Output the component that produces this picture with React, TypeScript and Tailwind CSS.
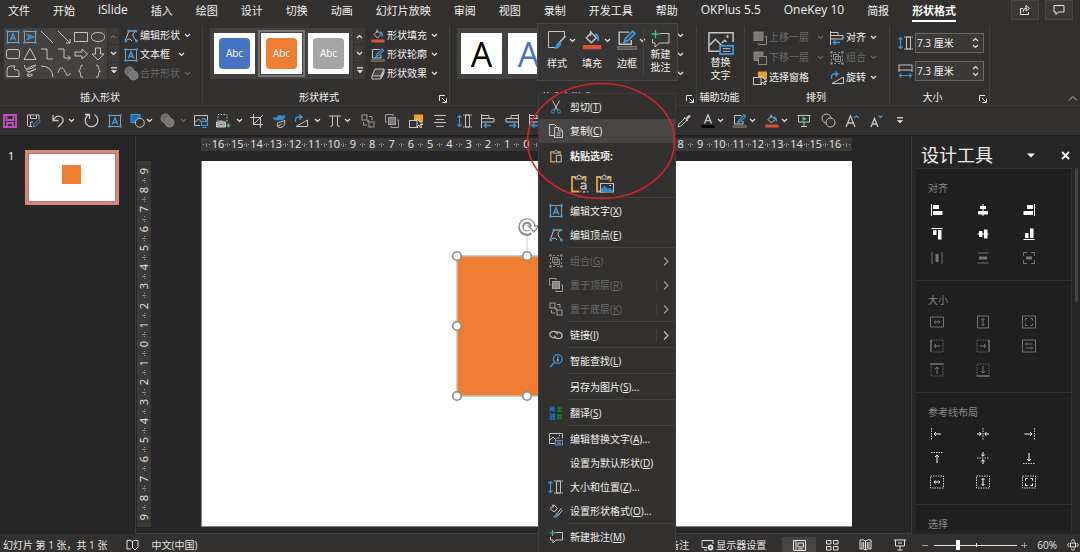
import React, { ReactNode } from "react";

const L = "#c8c6c4";
const B = "#3a96dd";
const RED = "#d9553a";
const DIM = "#6e6c6a";

function Svg({ children, w = 16, h = 16, vb, stroke = L, sw = 1 }: { children: ReactNode; w?: number; h?: number; vb?: string; stroke?: string; sw?: number }) {
  return (
    <svg width={w} height={h} viewBox={vb ?? `0 0 ${w} ${h}`} fill="none" stroke={stroke} strokeWidth={sw} className="block shrink-0" aria-hidden="true">
      {children}
    </svg>
  );
}

const Chevron = ({ dim = false, up = false }: { dim?: boolean; up?: boolean }) => (
  <Svg w={7} h={5} stroke={dim ? DIM : "#e8e6e4"} sw={1.2}>
    <path d={up ? "M1 4l2.5-2.5L6 4" : "M1 1l2.5 2.5L6 1"} />
  </Svg>
);
const Right = ({ dim = false }: { dim?: boolean }) => (
  <Svg w={6} h={9} stroke={dim ? "#a19f9d" : "#c8c6c4"} sw={1.1}>
    <path d="M1 .5l4 4-4 4" />
  </Svg>
);
const MoreArrow = () => (
  <Svg w={8} h={7} stroke="#e8e6e4" sw={1.2}>
    <path d="M1.5 3.5h5L4 6z" fill="#e8e6e4" strokeWidth="0.6" />
    <path d="M1 .8h6" />
  </Svg>
);
const Launcher = () => (
  <Svg w={8} h={8} stroke="#e8e6e4">
    <path d="M.5 6V.5H6M3 3l4 4M7.5 3.5v4h-4" />
  </Svg>
);

const corners = (x1: number, y1: number, x2: number, y2: number, c = B) =>
  [[x1, y1], [x2, y1], [x1, y2], [x2, y2]].map(([x, y]) => <rect key={`${x}-${y}`} x={x - 1} y={y - 1} width="2.4" height="2.4" fill={c} stroke="none" />);

const TextBox = ({ turned = false }: { turned?: boolean }) => (
  <Svg w={14} h={14}>
    <rect x="1.5" y="1.5" width="11" height="11" stroke="#a19f9d" />
    <path d="M4.300 10.500L7 3.700l2.700 6.800M5.300 8.400h3.400" stroke={B} strokeWidth="1.500" transform={turned ? "rotate(90 7 7)" : undefined} />
    {corners(1.3, 1.3, 12.3, 12.3)}
  </Svg>
);
const EditPoints = () => (
  <Svg w={14} h={14}>
    <path d="M5 2h6.500Q8 5 9 7t3.500 5M1.500 11L4.500 3M2 12q3.500-4 6 0" />
    <rect x="3.500" y="0.800" width="2.600" height="2.600" fill={B} stroke="none" />
    <rect x="10.500" y="0.800" width="2.600" height="2.600" fill={B} stroke="none" />
    <rect x="0.500" y="10.800" width="2.600" height="2.600" fill={B} stroke="none" />
    <rect x="11.200" y="10.800" width="2.600" height="2.600" fill={B} stroke="none" />
  </Svg>
);
const Merge = ({ light = false }: { light?: boolean }) => (
  <Svg w={15} h={15} stroke={light ? L : "#8a8886"}>
    <circle cx="5.5" cy="5.5" r="4.500" fill={light ? "none" : "#6e6c6a"} />
    <circle cx="9.500" cy="9.500" r="4.500" fill={light ? "#323130" : "#7a7876"} />
  </Svg>
);
const Bucket = ({ w = 14 }: { w?: number }) => (
  <Svg w={w} h={w} vb="0 0 14 14">
    <path d="M6 .5v3.500M3 5.500L6.500 2 10 5.500 6.500 9z" />
    <path d="M9 3q2.500.5 2.300 4.500" stroke={B} strokeWidth="1.500" />
    <rect x="0.500" y="10.500" width="13" height="3" fill={RED} stroke="none" />
  </Svg>
);
const Outline = ({ w = 14 }: { w?: number }) => (
  <Svg w={w} h={w} vb="0 0 14 14">
    <path d="M8.500 1.500h-7v8.500h8.500V7" />
    <path d="M5 8.500l1-2.500 5-5 1.500 1.500-5 5z" stroke={B} strokeWidth="1.300" />
    <rect x="0.500" y="11.500" width="13" height="2" fill="#5a5856" stroke="#8a8886" strokeWidth="0.500" />
  </Svg>
);
const Effects = () => (
  <Svg w={14} h={14}>
    <path d="M4 2h9l-3 7H1z" fill="#4a4846" />
    <path d="M1 9v3h8.500l3.500-6.500V2M10 9v3" />
    <path d="M10.500 9.500l2-4" strokeWidth="2" />
  </Svg>
);
const BringFront = () => (
  <Svg w={14} h={14} stroke="#8a8886">
    <rect x="1" y="1" width="9" height="8.500" fill="#7a7876" />
    <path d="M12 5.500h1.500v8H5.500V12" />
  </Svg>
);
const SendBack = () => (
  <Svg w={14} h={14} stroke="#8a8886">
    <path d="M5 9.500H1V1h9v3.500" fill="#7a7876" />
    <rect x="5.500" y="5.500" width="8" height="8" fill="#323130" />
  </Svg>
);
const Selection = () => (
  <Svg w={15} h={14}>
    <rect x="5" y="0.500" width="9" height="8" fill="#e9a32c" stroke="none" />
    <rect x="0.500" y="6.500" width="8" height="7" fill="#323130" />
    <path d="M8 5v8l2-2 1.500 3 1.300-.7-1.500-2.800H14z" fill="#323130" stroke="#e8e6e4" strokeWidth="0.900" />
  </Svg>
);
const AlignL = ({ right = false }: { right?: boolean }) => (
  <Svg w={14} h={14}>
    <g transform={right ? "matrix(-1 0 0 1 14 0)" : undefined}>
      <path d="M.5 0v14M1 1.500h7v3H1M1 4.500h12v3.500H1" />
      <path d="M3 11.500h7M5.500 9.200L3.200 11.500l2.300 2.300" stroke={B} strokeWidth="1.300" />
    </g>
  </Svg>
);
const Group = ({ dim = false }: { dim?: boolean }) => (
  <Svg w={14} h={14} stroke={dim ? "#8a8886" : L}>
    <path d="M4 1.500h6M4 12.500h6M1.500 4v6M12.500 4v6" strokeDasharray="2 2" />
    <rect x="3.500" y="3.500" width="5" height="5" />
    <rect x="5.500" y="5.500" width="5" height="5" />
    {corners(1.2, 1.2, 12.2, 12.2, dim ? "#8a8886" : L)}
  </Svg>
);
const Rotate = () => (
  <Svg w={14} h={14}>
    <path d="M2 12.500h11.500V6z" />
    <path d="M1.500 8V6q0-3 3-3H8M5.500.5L8 3 5.500 5.500" stroke={B} strokeWidth="1.300" />
  </Svg>
);
const SizeH = () => (
  <Svg w={15} h={14}>
    <rect x="8.500" y="1" width="4" height="12" />
    <path d="M6 1h9M6 13h9" strokeDasharray="1.500 1" />
    <path d="M2.500 1.500v11M.5 3.500l2-2 2 2M.5 10.500l2 2 2-2" stroke={B} strokeWidth="1.200" />
  </Svg>
);
const SizeW = () => (
  <Svg w={15} h={14}>
    <rect x="1" y="1" width="13" height="5" />
    <path d="M1 6v2M14 6v2" />
    <path d="M1.500 11.500h12M3.500 9.500l-2 2 2 2M11.500 9.500l2 2-2 2" stroke={B} strokeWidth="1.200" />
  </Svg>
);
const AltText = ({ w = 14 }: { w?: number }) => (
  <Svg w={w} h={w} vb="0 0 14 14" sw={w > 20 ? 0.8 : 1}>
    <path d="M7 11.500H.500V1.500h13v5M1 8l3-3 3.500 3.500M7.500 7L9 5.500l1 1" />
    <path d="M10 3.500h1" strokeWidth="1.500" />
    <rect x="6.500" y="8.500" width="7" height="4.500" fill="#323130" stroke={B} strokeWidth="1" />
    <path d="M8 10h4M8 11.500h4" strokeWidth="0.500" />
  </Svg>
);
const Back4 = () => (
  <Svg w={14} h={14} stroke="#a19f9d">
    <rect x="1" y="1" width="5" height="5" />
    <rect x="8" y="8" width="5" height="5" />
    <path d="M8 2.500h3V6M2.500 8v3H6" />
    <path d="M6.500 6.500h1v1h-1z" fill="#7a7876" />
  </Svg>
);

/* ---------- Ribbon pieces ---------- */

function Btn({ icon, text, chevron = true, dim = false, wide = false }: { icon: ReactNode; text: string; chevron?: boolean; dim?: boolean; wide?: boolean }) {
  return (
    <button className={`flex h-[19px] items-center gap-0.5 whitespace-nowrap ${dim ? "text-[#6e6c6a]" : "text-[#f3f2f1]"}`}>
      <span className="flex w-[14px] justify-center">{icon}</span>
      {text}
      {chevron && <span className={wide ? "ml-1.5" : "ml-0.5"}><Chevron dim={dim} /></span>}
    </button>
  );
}

function RibbonGroup({ title, width, launcher = false, children }: { title: string; width: string; launcher?: boolean; children: ReactNode }) {
  return (
    <section className={`relative flex shrink-0 flex-col border-r border-[#44423f] ${width}`}>
      <div className="h-[65px]">{children}</div>
      <h2 className={`h-3 text-center leading-3 ${launcher ? "pr-3.5" : "pr-0.5"}`}>{title}</h2>
      {launcher && (
        <button aria-label={`${title}选项`} className="absolute right-0.5 bottom-0">
          <Launcher />
        </button>
      )}
    </section>
  );
}

function GalleryScroll({ top = false }: { top?: boolean }) {
  return (
    <div className="flex w-3 flex-col divide-y divide-[#323130] border-l border-[#323130] bg-[#3e3c3a]">
      <button aria-label="上一行" className="flex flex-1 items-center justify-center"><Chevron up dim={top} /></button>
      <button aria-label="下一行" className="flex flex-1 items-center justify-center"><Chevron /></button>
      <button aria-label="更多" className="flex flex-1 items-center justify-center"><MoreArrow /></button>
    </div>
  );
}

const shapePaths = [
  "", "", "M1 1l12 12", "M1 1l12 12M13 9v4H9", "M.5 2.500h13v9H.5z", "M7 2.500c9 0 9 9 0 9s-9-9 0-9z",
  "M3 2.500h8q2.500 0 2.500 2v5q0 2-2.500 2H3q-2.500 0-2.500-2v-5q0-2 2.500-2z", "M7 1.500L13 12.500H1z", "M1 2h6v10h6", "M1 2h6v9h6M11 8.500l2.500 2.500L11 13.500",
  "M1 5h7V2l5.500 5L8 12V9H1z", "M4.500 1h5v6H13l-6 6-6-6h3.500z",
  "M1 12.500V6q0-4 4-4h4q-2 3 0 4 4-1 4 3v3.500z", "M1.500 1q0 5 4.500 4 5-1 7-4Q4 3 3.500 6.500q1 3 9.500-1.500-9 3-8.500 6.500 2 2.500 5-.500-1-2-5 1", "M1 2q11 0 12 11", "M1 9q2.500-8 5.500-4t3 6q2 2 4-2",
  "M9 1Q6.500 1 6.500 3.500T4.500 7q2 0 2 3.500T9 13", "M5 1q2.500 0 2.500 2.500T9.500 7q-2 0-2 3.500T5 13",
];

const StyleTile = ({ fill, selected = false }: { fill: string; selected?: boolean }) => (
  <button className={`flex h-[47px] w-[47px] items-center justify-center border-2 ${selected ? "border-[#767472]" : "border-transparent"}`}>
    <span className="flex h-[41px] w-[41px] items-center justify-center bg-white">
      <span className={`flex h-[31px] w-[31px] items-center justify-center rounded-sm text-[10px] text-white ${fill}`}>Abc</span>
    </span>
  </button>
);

const tabs = ["文件", "开始", "iSlide", "插入", "绘图", "设计", "切换", "动画", "幻灯片放映", "审阅", "视图", "录制", "开发工具", "帮助", "OKPlus 5.5", "OneKey 10", "简报", "形状格式"];
const latinTab = /^[A-Za-z0-9 .]+$/;

function TabBar() {
  return (
    <header className="flex h-[26px] items-start justify-between pl-2 pr-[7px]">
      <nav className="flex gap-[23px] whitespace-nowrap text-[11px] text-[#f3f2f1]">
        {tabs.map((t) => (
          <a
            key={t}
            href="#"
            className={
              t === "形状格式"
                ? "h-[22px] border-b-2 border-white pt-[3px] text-[11px] font-bold leading-4 text-white"
                : latinTab.test(t)
                  ? "pt-0.5 text-[12px] leading-4"
                  : "pt-[3px] text-[11px] leading-4"
            }
          >
            {t}
          </a>
        ))}
      </nav>
      <div className="flex gap-1.5">
        <button aria-label="共享" className="flex h-5 w-7 items-center justify-center border border-[#4a4846] bg-[#3b3a39]">
          <Svg w={12} h={12} stroke="#e8e6e4"><path d="M4 4.500H1.500v6h8V8M4 8q0-4 4-4M7 1.500L10.500 4.500 7 7z" /></Svg>
        </button>
        <button aria-label="批注" className="flex h-5 w-7 items-center justify-center border border-[#4a4846] bg-[#3b3a39]">
          <Svg w={12} h={12} stroke="#e8e6e4"><path d="M1 1.500h10v6.500H5.500L3 10.500V8H1z" /></Svg>
        </button>
      </div>
    </header>
  );
}

function SizeField({ label, icon }: { label: string; icon: ReactNode }) {
  return (
    <div className="flex h-[20px] items-center gap-0.5">
      {icon}
      <div className="flex h-5 w-[69px] border border-[#6a6866] bg-[#3b3a39]">
        <input aria-label={label} defaultValue="7.3 厘米" className="w-0 flex-1 bg-transparent pl-px text-[10px] text-[#f3f2f1] outline-none" />
        <div className="flex w-4 flex-col items-center justify-evenly">
          <button aria-label={`增加${label}`}><Chevron up /></button>
          <button aria-label={`减少${label}`}><Chevron /></button>
        </div>
      </div>
    </div>
  );
}

function Ribbon() {
  return (
    <div className="flex h-20 border-b border-[#403e3c] pb-0.5 text-[10px] text-[#f3f2f1]">
      <RibbonGroup title="插入形状" width="w-[203px]">
        <div className="flex gap-[5px] pl-1 pt-0.5">
          <div className="flex h-[51px] bg-[#444240]">
            <div className="grid w-[103px] grid-cols-6 grid-rows-3 place-items-center">
              {shapePaths.map((d, i) => (
                <button key={i} aria-label={`形状 ${i + 1}`}>
                  {i < 2 ? <TextBox turned={i === 1} /> : <Svg w={14} h={14}><path d={d} /></Svg>}
                </button>
              ))}
            </div>
            <GalleryScroll top />
          </div>
          <div className="-mt-0.5">
            <Btn icon={<EditPoints />} text="编辑形状" />
            <Btn icon={<TextBox />} text="文本框" wide />
            <Btn icon={<Merge />} text="合并形状" dim />
          </div>
        </div>
      </RibbonGroup>

      <RibbonGroup title="形状样式" width="w-[247px]" launcher>
        <div className="flex gap-1.5 pl-[7px] pt-0.5">
          <div className="flex h-[51px] bg-[#444240]">
            <div className="flex items-center px-px">
              <StyleTile fill="bg-[#4472c4]" />
              <StyleTile fill="bg-[#ed7d31]" selected />
              <StyleTile fill="bg-[#a5a5a5]" />
            </div>
            <GalleryScroll />
          </div>
          <div className="-mt-0.5">
            <Btn icon={<Bucket />} text="形状填充" />
            <Btn icon={<Outline />} text="形状轮廓" />
            <Btn icon={<Effects />} text="形状效果" />
          </div>
        </div>
      </RibbonGroup>

      <RibbonGroup title="艺术字样式" width="w-[247px]" launcher>
        <div className="flex justify-between pl-[7px] pr-3 pt-0.5">
          <div className="flex h-[51px] w-[150px] gap-1.5 bg-[#444240] px-1 py-[5px]">
            <button className="h-[41px] w-[41px] bg-white text-[34px] leading-[43px] text-black">A</button>
            <button className="h-[41px] w-[41px] bg-white text-[34px] leading-[43px] text-[#4472c4]">A</button>
          </div>
          <div className="-mt-0.5 flex flex-col">
            {["文本填充", "文本轮廓", "文本效果"].map((n) => (
              <button key={n} aria-label={n} className="flex h-[19px] items-center"><Chevron /></button>
            ))}
          </div>
        </div>
      </RibbonGroup>

      <RibbonGroup title="辅助功能" width="w-12">
        <button className="flex w-full flex-col items-center pt-1 leading-[13px]">
          <AltText w={26} />
          <span>替换<br />文字</span>
        </button>
      </RibbonGroup>

      <RibbonGroup title="排列" width="w-[145px]">
        <div className="flex gap-1.5 pl-2 pt-0.5">
          <div className="flex flex-col gap-px">
            <Btn icon={<BringFront />} text="上移一层" dim wide />
            <Btn icon={<SendBack />} text="下移一层" dim wide />
            <Btn icon={<Selection />} text="选择窗格" chevron={false} />
          </div>
          <div className="flex flex-col gap-px">
            <Btn icon={<AlignL />} text="对齐" />
            <Btn icon={<Group dim />} text="组合" dim />
            <Btn icon={<Rotate />} text="旋转" />
          </div>
        </div>
      </RibbonGroup>

      <RibbonGroup title="大小" width="w-[100px]" launcher>
        <div className="flex flex-col gap-2 pl-2 pt-[7px]">
          <SizeField label="高度" icon={<SizeH />} />
          <SizeField label="宽度" icon={<SizeW />} />
        </div>
      </RibbonGroup>
      <button aria-label="折叠功能区" className="ml-auto flex items-end pr-0.5 pb-0.5">
        <Svg w={10} h={6}><path d="M1 5.500l4-4 4 4" /></Svg>
      </button>
    </div>
  );
}

/* ---------- Quick access bar ---------- */

const Q = ({ name, children }: { name: string; children: ReactNode }) => (
  <button aria-label={name} className="flex w-4 shrink-0 items-center justify-center">{children}</button>
);
const QDrop = ({ name, children, dim = false, width = "w-6" }: { name: string; children: ReactNode; dim?: boolean; width?: string }) => (
  <button aria-label={name} className={`flex shrink-0 items-center justify-between ${width}`}>
    <span className="flex w-4 justify-center">{children}</span>
    <Chevron dim={dim} />
  </button>
);

function QuickBar() {
  return (
    <div role="toolbar" className="flex h-[30px] items-center border-b border-[#1c1b1a] pl-0.5">
      <div className="flex gap-2">
        <Q name="保存">
          <Svg w={14} h={14} stroke="#c04fc4" sw={1.8}><path d="M1 1h12v12H1zM3.500 1v5h7V1M4 13V9h6v4" /></Svg>
        </Q>
        <Q name="另存为">
          <Svg w={14} h={14}><path d="M5 12.500H1.500l-1-1V1H12v4M3.500 1v3.500h6V1M3.500 12V8H6" /><path d="M6 13l.7-2.500 5-5 1.700 1.700-5 5z" stroke={B} /></Svg>
        </Q>
        <QDrop name="撤消" width="w-[25px]">
          <Svg w={14} h={14} sw={1.3}><path d="M2 1v5.500h5.500M2 6.500q3-5.500 7.500-4 5 3 1 7L7 13" /></Svg>
        </QDrop>
        <Q name="恢复">
          <Svg w={15} h={15} sw={1.300}><path d="M1 1.500h4.500v4.500M10.500 1.800a6.300 6.300 0 1 1-5.500-.2" /></Svg>
        </Q>
        <Q name="文本框"><TextBox /></Q>
      </div>
      <div className="ml-1.5 flex gap-1.5">
        <QDrop name="形状">
          <Svg w={15} h={14}><rect x="1" y="0.500" width="9" height="8" fill="#1a6fc4" stroke={B} /><circle cx="9.800" cy="8.800" r="4.500" fill="#323130" /></Svg>
        </QDrop>
        <QDrop name="合并形状" dim width="w-7"><Merge /></QDrop>
        <Q name="图片">
          <Svg w={15} h={14}><path d="M6 11.500H.5V1.500h13v5M1 8.500L4.500 5l3 3M8 5.500L9.500 4l3 3" /><rect x="7.500" y="7.500" width="6" height="4" fill="#323130" stroke={B} strokeWidth="1.300" /><path d="M8.500 13.500h4" stroke={B} /></Svg>
        </Q>
        <QDrop name="屏幕截图" width="w-7">
          <Svg w={15} h={14}><path d="M2 7V.5h9V8" strokeDasharray="1.500 1.500" /><path d="M.5 8h2l1-1h3l1 1h2v5h-9z" fill="#a19f9d" /><circle cx="5" cy="10.300" r="1.300" fill="#323130" /><path d="M12.500 9.500v4M10.500 11.500h4" stroke="#4cc27a" strokeWidth="1.300" /></Svg>
        </QDrop>
        <Q name="裁剪"><Svg w={14} h={14}><path d="M3.500 0v10.500H13M0 3.500h10.500V14M3.500 10.500L13 1" /></Svg></Q>
        <Q name="更改形状">
          <Svg w={14} h={14}><path d="M1 3.500q3 1 4 0 1-3 3-2t5-.5q0 4-3 5H5Q1.500 6.500 1 3.500z" fill="#2f87d6" stroke={B} strokeWidth="0.500" /><path d="M5 11q0-3.500 3.500-3l4.500-1.500q0 7-5 7-3 0-3-2.500zM6 11.500q3 0 4-2" /></Svg>
        </Q>
        <QDrop name="旋转" width="w-7"><Rotate /></QDrop>
        <QDrop name="公式" width="w-6">
          <Svg w={14} h={14}><path d="M1 2h12M4.500 2v9q0 1.500-2 1.500M9.500 2v9q0 1.500 2 1.500" /></Svg>
        </QDrop>
      </div>
      <div className="ml-[9px] flex gap-2">
        <Q name="取消组合"><Back4 /></Q>
        <Q name="置于顶层">
          <Svg w={14} h={14} stroke="#a19f9d"><rect x="3.500" y="3.500" width="7" height="7" fill="#7a7876" /><path d="M2 8H.5V.5H8V2M12 6h1.500v7.500H6V12" /></Svg>
        </Q>
        <Q name="选择窗格"><Selection /></Q>
        <Q name="居中"><Svg w={14} h={14}><path d="M1 1.500h12M3 5.500h8M1 8.500h12M3 12.500h8" /></Svg></Q>
        <Q name="大小"><SizeH /></Q>
        <Q name="左对齐"><AlignL /></Q>
        <Q name="右对齐"><AlignL right /></Q>
        <Q name="分布"><AlignL /></Q>
      </div>
      <div className="ml-[132px] flex gap-2">
        <Q name="取色器">
          <Svg w={14} h={14}><path d="M1 13l1-3 6-6 2 2-6 6zM7 3l4 4" /><path d="M9 4.500l3-3.300 1.300 1.300-3.300 3z" fill={L} /></Svg>
        </Q>
        <QDrop name="字体颜色"><Svg w={14} h={14}><path d="M3.500 9.500L7 .8l3.500 8.700M4.700 6.700h4.600" strokeWidth="1.300" /><rect x="0.500" y="11" width="13" height="3" fill="#000" stroke="none" /></Svg></QDrop>
        <QDrop name="轮廓"><Outline /></QDrop>
        <QDrop name="填充"><Bucket /></QDrop>
        <Q name="放映"><Svg w={14} h={14}><path d="M.5 1.500h13M1.500 1.500v6.500h11V1.500M7 8v4.500M4 12.500h6" /><path d="M5.500 2.500l4.500 2.300-4.500 2.300z" fill="#4cc27a" stroke="none" /></Svg></Q>
        <Q name="相交"><Merge light /></Q>
        <Q name="增大字号"><Svg w={14} h={14}><path d="M1 13L5.500 2 10 13M2.500 9h6" strokeWidth="1.300" /><path d="M9.500 4l2-2 2 2" stroke={B} strokeWidth="1.300" /></Svg></Q>
        <Q name="减小字号"><Svg w={14} h={14}><path d="M2 13L5.500 4.500 9 13M3.200 10h4.600" strokeWidth="1.300" /><path d="M9.500 1.500l2 2 2-2" stroke={B} strokeWidth="1.300" /></Svg></Q>
        <Q name="自定义"><MoreArrow /></Q>
      </div>
    </div>
  );
}

/* ---------- Rulers and slide ---------- */

function RulerGap({ vertical = false }: { vertical?: boolean }) {
  return (
    <span className={`flex flex-1 items-center justify-evenly ${vertical ? "flex-col" : ""}`}>
      <i className="h-px w-px bg-[#a19f9d]" />
      <i className={`bg-[#8a8886] ${vertical ? "h-px w-1" : "h-1 w-px"}`} />
      <i className="h-px w-px bg-[#a19f9d]" />
    </span>
  );
}

function Ruler({ max, vertical = false }: { max: number; vertical?: boolean }) {
  const nums = Array.from({ length: max * 2 + 1 }, (_, i) => Math.abs(max - i));
  return (
    <div className={`flex bg-[#3b3a39] text-[11px] leading-3 text-[#e8e6e4] ${vertical ? "w-[14px] flex-col items-stretch py-1" : "h-[13px] flex-1"}`}>
      {!vertical && <span className="flex w-[11px]"><RulerGap /></span>}
      {nums.map((n, i) => (
        <React.Fragment key={i}>
          {i > 0 && <RulerGap vertical={vertical} />}
          <span className={`flex h-3 items-center justify-center ${vertical ? "-rotate-90" : "w-3"}`}>{n}</span>
        </React.Fragment>
      ))}
      {!vertical && <span className="flex w-[11px]"><RulerGap /></span>}
    </div>
  );
}

function SelectedShape() {
  const pts = [[10, 50], [80, 50], [150, 50], [10, 120], [150, 120], [10, 190], [80, 190], [150, 190]];
  return (
    <div className="absolute left-1/2 top-[45px] -translate-x-1/2">
      <svg width="160" height="200" viewBox="0 0 160 200" fill="none" className="block" role="img" aria-label="橙色正方形">
        <rect x="10" y="50" width="140" height="140" fill="#ed7d31" stroke="#bdbdbd" strokeWidth="1.500" />
        <path d="M80 30v20" stroke="#c8c8c8" />
        <path d="M86 21a6 6 0 1 0-2.500 5" stroke="#8a8a8a" strokeWidth="5.500" />
        <path d="M81.500 20h10.500l-5.200 6z" fill="#fff" stroke="#8a8a8a" strokeWidth="1.400" />
        <path d="M86 22v-1a6 6 0 1 0-2.900 4.700" stroke="#fff" strokeWidth="2.400" />
        {pts.map(([x, y]) => <circle key={`${x}-${y}`} cx={x} cy={y} r="4.300" fill="#fff" stroke="#8a8a8a" strokeWidth="1.600" />)}
      </svg>
    </div>
  );
}

function Stage() {
  return (
    <main className="flex min-w-0 flex-1 flex-col border-x border-b border-[#403e3d] pb-1.5 pl-px pr-[59px] pt-0.5">
      <div className="flex pl-16"><Ruler max={16} /></div>
      <div className="mt-2.5 flex flex-1">
        <Ruler max={9} vertical />
        <div className="relative ml-[50px] flex-1 border-b border-l border-[#8a8886] bg-white"><SelectedShape /></div>
      </div>
    </main>
  );
}

/* ---------- Design pane ---------- */

const P = "#797775";
const W = "#ffffff";
const solid = (d: string, c: string, line = "") => (
  <Svg w={14} h={14} stroke="none"><path d={d} fill={c} />{line && <path d={line} stroke={c} />}</Svg>
);
const thin = (d: string, c: string, dash = "", edge = "") => (
  <Svg w={14} h={14} stroke={c}><path d={d} />{dash && <path d={dash} strokeDasharray="1.500 1" strokeOpacity="0.8" />}{edge && <path d={edge} strokeWidth="1.500" />}</Svg>
);
const BOX = "M.5 1h13v12H.5z";
const alH = "M4 7h6M5.500 5.500L4 7l1.500 1.500M8.500 5.500L10 7 8.500 8.500";
const alV = "M7 3.500v7M5.500 5L7 3.500 8.500 5M5.500 9L7 10.500 8.500 9";
const fullC = "M3.500 5.500v-2h2M8.500 3.500h2v2M10.500 8.500v2h-2M5.500 10.500h-2v-2";

const paneSections: { title: string; icons: [string, ReactNode][] }[] = [
  {
    title: "对齐",
    icons: [
      ["左对齐", solid("M3 2h6v4H3zM3 8h9.500v4H3z", W, "M1.500 1v12")],
      ["水平居中", solid("M4 3h6v3H4zM2 8h10v3.500H2z", W, "M7 1v12")],
      ["右对齐", solid("M5 2h6v4H5zM1.500 8h9.500v4H1.500z", W, "M12.500 1v12")],
      ["顶端对齐", solid("M3 3h3.500v5H3zM8 3h3.500v9.500H8z", W, "M1.500 1.500h11")],
      ["垂直居中", solid("M3 4h3.500v6H3zM8 2.500h3.500v9H8z", W, "M1.500 7h11")],
      ["底端对齐", solid("M3 6h3.500v5H3zM8 1.500h3.500V11H8z", W, "M1.500 12.500h11")],
      ["横向分布", solid("M5.500 3h3v8h-3z", P, "M2 1v12M12 1v12")],
      ["纵向分布", solid("M3 5.500h8v3H3z", P, "M1.500 2h11M1.500 12h11")],
      ["页面居中", solid("M4 5.500h6v3H4z", P, "M1.500 5V1.500H5M9 1.500h3.500V5M12.500 9v3.500H9M5 12.500H1.500V9")],
    ],
  },
  {
    title: "大小",
    icons: [
      ["等宽", thin("M.5 2h13v10H.5z" + alH, P)],
      ["等高", thin("M1.500 1h11v12h-11z" + alV, P)],
      ["等大", thin(BOX + fullC, P)],
      ["左延伸", thin("M4 7h6M6 5L4 7l2 2", P, "M1 1h12v12H1", "M1 1v12")],
      ["右延伸", thin("M4 7h6M8 5l2 2-2 2", P, "M13 1H1v12h12", "M13 1v12")],
      ["交换", thin(BOX + "M3.500 5h7M5 3.500L3.500 5 5 6.500M3.500 9h7M9 7.500L10.500 9 9 10.500", P)],
      ["上延伸", thin("M7 4v7M5 6l2-2 2 2", P, "M1 1v12h12V1", "M.5 1h13")],
      ["下延伸", thin("M7 3v7M5 8l2 2 2-2", P, "M1 13V1h12v12", "M.5 13h13")],
    ],
  },
  {
    title: "参考线布局",
    icons: [
      ["左侧参考线", thin("M4 7h7M6 5L4 7l2 2", W, "M1.500 1v12")],
      ["中心竖线", thin("M1 7h4M3.500 5.200L5.300 7 3.500 8.800M13 7H9M10.500 5.200L8.700 7l1.800 1.800", W, "M7 1v12")],
      ["右侧参考线", thin("M2.500 7H10M8 5l2 2-2 2", W, "M12.500 1v12")],
      ["顶部参考线", thin("M7 4v8M5 6l2-2 2 2", W, "M1 1.500h12")],
      ["中心横线", thin("M7 1v4M5.200 3.500L7 5.300l1.800-1.800M7 13V9M5.200 10.500L7 8.700l1.800 1.800", W, "M1 7h12")],
      ["底部参考线", thin("M7 2v8M5 8l2 2 2-2", W, "M1 12.500h12")],
      ["宽度参考", thin(alH, W, BOX)],
      ["高度参考", thin(alV, W, BOX)],
      ["四周参考", thin(fullC, W, BOX)],
    ],
  },
  { title: "选择", icons: [] },
];

function DesignPane() {
  return (
    <aside className="flex w-[168px] shrink-0 flex-col overflow-hidden pl-1">
      <div className="flex h-8 shrink-0 items-center justify-between pl-[5px] pr-2.5 pt-1.5">
        <h2 className="text-[18px] leading-6 text-[#f3f2f1]">设计工具</h2>
        <div className="flex items-center gap-[26px]">
          <button aria-label="窗格选项"><Svg w={8} h={5} stroke="none"><path d="M0 .5h8L4 4.500z" fill="#fff" /></Svg></button>
          <button aria-label="关闭"><Svg w={9} h={9} stroke="#fff" sw={1.800}><path d="M1 1l7 7M8 1L1 8" /></Svg></button>
        </div>
      </div>
      <div className="flex min-h-0 flex-1 justify-between pr-0.5">
        <div className="mb-[3px] w-[156px] overflow-hidden border-r border-[#333231] bg-[#1f1f1f]">
          {paneSections.map((s) => (
            <section key={s.title} className="border-t border-[#333231] px-3 pt-[11px] pb-2.5">
              <h3 className="h-4 text-[10px] leading-4 text-[#8a8886]">{s.title}</h3>
              <div className="mt-0.5 grid grid-cols-[46px_46px_46px]">
                {s.icons.map(([name, icon]) => (
                  <button key={name} aria-label={name} className="flex h-6 items-center pl-0.5">{icon}</button>
                ))}
              </div>
            </section>
          ))}
        </div>
        <div className="h-[134px] w-[3px] rounded bg-[#454442]" />
      </div>
    </aside>
  );
}

/* ---------- Status bar ---------- */

function StatusBar() {
  return (
    <footer className="flex h-[18px] items-center justify-between bg-[#323130] pl-[3px] pr-px pt-1 text-[10px] text-[#e8e6e4]">
      <div className="flex items-center whitespace-nowrap">
        <span>幻灯片 第 1 张，共 1 张</span>
        <button aria-label="拼写检查" className="ml-[19px]">
          <Svg w={13} h={12} stroke="#e8e6e4"><path d="M6.500 2.500Q4 .5 1 1.500v8.500h4M6.500 2.500Q9 .5 12 1.500V7M6.500 2.500V9M7 9l2 2 3.500-3.500" /></Svg>
        </button>
        <span className="ml-3">中文(中国)</span>
      </div>
      <div className="flex items-center whitespace-nowrap">
        <button>备注</button>
        <button className="ml-3 flex items-center gap-0.5">
          <Svg w={13} h={12} stroke="#e8e6e4"><path d="M6 8.500H1V1.500h11V5M3 11h3" /><circle cx="9.500" cy="8.500" r="2" strokeWidth="1.800" /></Svg>
          显示器设置
        </button>
        <button aria-label="普通视图" className="ml-4 flex h-4 w-[34px] items-center justify-center bg-[#484644]">
          <Svg w={13} h={11} stroke="#e8e6e4"><path d="M.5.5h12v10H.5zM3 .5v10M5 3h5.500v4H5zM5 9h5" /></Svg>
        </button>
        <button aria-label="幻灯片浏览" className="ml-2.5">
          <Svg w={13} h={11} stroke="#e8e6e4"><path d="M.5.5h4.500v3.500H.5zM7.500.5H12v3.500H7.500zM.5 6.500h4.500v3.500H.5zM7.500 6.500H12v3.500H7.500z" /></Svg>
        </button>
        <button aria-label="阅读视图" className="ml-5">
          <Svg w={13} h={12} stroke="#e8e6e4"><path d="M6.500 2Q4 0 1 1v9q3-1 5.500 1Q9 9 12 10V1Q9 0 6.500 2zV11M3 3v6M4.700 3v6M8.300 3v6M10 3v6" /></Svg>
        </button>
        <button aria-label="幻灯片放映" className="ml-[22px]">
          <Svg w={12} h={12} stroke="#e8e6e4"><path d="M0 1h12M1.500 1v6h9V1M6 7v3.500M3.500 11h5M4 4h4" /></Svg>
        </button>
        <button aria-label="缩小" className="ml-4"><Svg w={6} h={6} stroke="#a19f9d"><path d="M0 3.500h6" /></Svg></button>
        <div className="relative ml-1.5 flex w-[83px] items-center">
          <span className="absolute left-1/2 h-1 w-px bg-[#e8e6e4]" />
          <input
            type="range"
            aria-label="缩放"
            defaultValue={28}
            className="h-3 w-full appearance-none bg-[linear-gradient(#e8e6e4,#e8e6e4)] bg-[length:100%_1px] bg-center bg-no-repeat [&::-webkit-slider-thumb]:h-2.5 [&::-webkit-slider-thumb]:w-1 [&::-webkit-slider-thumb]:appearance-none [&::-webkit-slider-thumb]:bg-white"
          />
        </div>
        <button aria-label="放大" className="ml-1"><Svg w={6} h={6} stroke="#a19f9d"><path d="M0 3.500h6M3.500.5v6" /></Svg></button>
        <span className="ml-2.5">60%</span>
        <button aria-label="适应窗口" className="ml-2.5">
          <Svg w={12} h={12} stroke="#e8e6e4"><rect x="3.500" y="4" width="5" height="4" /><path d="M4 2.300L6 .5l2 1.800M4 9.700l2 1.800 2-1.800M2.200 4L.5 6l1.700 2M9.800 4L11.500 6 9.800 8" /></Svg>
        </button>
      </div>
    </footer>
  );
}

/* ---------- Floating toolbar and context menu ---------- */

function MiniTool({ icon, text }: { icon: ReactNode; text: string }) {
  return (
    <button className="flex w-[35px] flex-col items-start gap-1.5 whitespace-nowrap pl-[9px]">
      <span className="flex items-center gap-0.5">{icon}<Chevron /></span>
      <span>{text}</span>
    </button>
  );
}

function MiniToolbar() {
  return (
    <div role="toolbar" className="absolute left-[537px] top-[23px] flex h-[58px] w-[141px] border border-[#4a4846] bg-[#383635] pt-1.5 text-[10px] leading-[14px] text-[#f3f2f1]">
      <MiniTool
        text="样式"
        icon={<Svg w={20} h={20}><path d="M8 17.500H1.500v-16h16V8" /><path d="M18.500 6L12 13" stroke={L} strokeWidth="1.500" /><path d="M12 12l2 2q-2 5-7 4 3-1 3-4z" fill={B} stroke={B} /></Svg>}
      />
      <MiniTool text="填充" icon={<Bucket w={20} />} />
      <MiniTool text="边框" icon={<Outline w={20} />} />
      <button className="mb-1 flex flex-1 flex-col items-center border-l border-[#4a4846] leading-[13px]">
        <Svg w={19} h={18}><path d="M9 3.500h9v9.500H8.500L4 17v-4H1.500V9" /><path d="M4.500 0v8M.5 4h8" stroke="#4cc27a" strokeWidth="1.300" /></Svg>
        <span>新建<br />批注</span>
      </button>
    </div>
  );
}

function Item({ icon, text, k, tail = "", dim = false, arrow = false, split = false, active = false }: { icon?: ReactNode; text: string; k: string; tail?: string; dim?: boolean; arrow?: boolean; split?: boolean; active?: boolean }) {
  return (
    <button role="menuitem" className={`flex h-6 w-full shrink-0 items-center whitespace-nowrap pr-1.5 ${active ? "bg-[#484644]" : ""} ${dim ? "text-[#6e6c6a]" : "text-[#f3f2f1]"}`}>
      <span className="flex w-[31px] justify-center pl-0.5">{icon}</span>
      <span>{text}(<u>{k}</u>){tail}</span>
      {arrow && (
        <span className={`ml-auto flex h-3 items-center pl-1.5 ${split ? "border-l border-[#44423f]" : ""}`}><Right dim={dim} /></span>
      )}
    </button>
  );
}
const Sep = () => <div role="separator" className="mb-px ml-7 h-px shrink-0 bg-[#44423f]" />;

const Clip = ({ kind }: { kind: "small" | "text" | "image" }) => (
  <Svg w={kind === "small" ? 14 : 19} h={kind === "small" ? 14 : 20} vb="0 0 19 20">
    <path d="M5.500 4H2v14.500h7M13 4h2.500v4.500" stroke="#e3a74a" strokeWidth="1.800" />
    <path d="M5.500 6V4h1.700q2-4.500 4 0H13v2z" stroke={L} strokeWidth="1.200" />
    {kind === "small" && <path d="M10 9h7v9.500h-7z" stroke={L} strokeWidth="1.400" />}
    {kind === "text" && (
      <>
        <path d="M11 10.500q5-1.500 5 1.800V16.500M16 13q-5-.5-5 1.700t5 .3" stroke={L} strokeWidth="1.400" />
        <path d="M9.500 18.800h2" stroke={RED} strokeWidth="1.800" />
        <path d="M13 18.800h2" stroke="#e3a74a" strokeWidth="1.800" />
        <path d="M16.500 18.800h2" stroke={B} strokeWidth="1.800" />
      </>
    )}
    {kind === "image" && (
      <>
        <rect x="5.500" y="10.500" width="13" height="8.500" fill="#323130" stroke={L} />
        <path d="M6 18.500v-2.500l3.500-3.500 3.500 3.500 2-1.500 3.500 4z" fill="#2f87d6" stroke="none" />
        <path d="M14.500 12.500h1.500" stroke="#fff" />
      </>
    )}
  </Svg>
);

function ContextMenu() {
  return (
    <div role="menu" className="absolute bottom-0 left-[538px] top-[93px] flex w-[138px] flex-col overflow-hidden border border-b-0 border-[#3f3d3b] bg-[#323130] pt-px text-[10px]">
      <Item text="剪切" k="T" icon={<Svg w={12} h={14}><path d="M2.500.5l5 9.500M9.500.5L4.500 10" /><circle cx="3" cy="11.500" r="1.600" stroke={B} /><circle cx="9" cy="11.500" r="1.600" stroke={B} /></Svg>} />
      <Item text="复制" k="C" active icon={<Svg w={14} h={14}><path d="M5 11.500H.5V.5h5l2 2v1M5.500 3.500H10l3.500 3v7h-8zM9.500 3.500V7h4M7.500 9h4M7.500 11.200h4" /></Svg>} />
      <div className="flex h-[26px] shrink-0 items-center font-bold text-[#f3f2f1]">
        <span className="flex w-[31px] justify-center pl-0.5"><Clip kind="small" /></span>
        粘贴选项:
      </div>
      <div className="flex h-7 shrink-0 items-start gap-1.5 pl-[31px] pt-1">
        <button role="menuitem" aria-label="使用目标主题"><Clip kind="text" /></button>
        <button role="menuitem" aria-label="图片"><Clip kind="image" /></button>
      </div>
      <Sep />
      <Item text="编辑文字" k="X" icon={<TextBox />} />
      <Item text="编辑顶点" k="E" icon={<EditPoints />} />
      <Sep />
      <Item text="组合" k="G" dim arrow icon={<Group dim />} />
      <Item text="置于顶层" k="R" dim arrow split icon={<Svg w={14} h={14} stroke="#a19f9d"><rect x="3.500" y="3.500" width="7" height="7" fill="#8a8886" /><path d="M2 7H.5V.5H7V2M12 7h1.500v6.500H7V12" /></Svg>} />
      <Item text="置于底层" k="K" dim arrow split icon={<Back4 />} />
      <Sep />
      <Item text="链接" k="I" arrow split icon={<Svg w={14} h={10} sw={1.200}><path d="M7 7.500Q3 8.500 1.200 6 0 2 4 1.500q4-.5 4.500 3M7 2.500q4-1 5.800 1.500Q14 8 10 8.500 6 9 5.500 5.500" /></Svg>} />
      <Sep />
      <Item text="智能查找" k="L" icon={<Svg w={14} h={14} stroke={B} sw={1.300}><circle cx="8.800" cy="5" r="4.300" /><path d="M5.700 8.300L1 13.300" /><path d="M8.800 4.500v3M8.800 2.500v1" stroke={L} /></Svg>} />
      <Sep />
      <Item text="另存为图片" k="S" tail="..." />
      <Sep />
      <Item text="翻译" k="S" icon={<Svg w={14} h={14} stroke="#1b72c8" sw={1.500}><path d="M1.500 .5v5M1.500 3h4M5.500.5L2.500 3l3 2.500M1 8.500h4.500v4.500H1.500v-2.500h4" /><path d="M8 2h5M10.500.5v5M8 5h5M8 9.500h5M9 8v5M12 8v5M8 12.500h5" stroke="#11881a" strokeWidth="1.300" /></Svg>} />
      <Sep />
      <Item text="编辑替换文字" k="A" tail="..." icon={<AltText />} />
      <Item text="设置为默认形状" k="D" />
      <Item text="大小和位置" k="Z" tail="..." icon={<SizeH />} />
      <Item text="设置形状格式" k="O" tail="..." icon={<Svg w={14} h={14}><path d="M4 .5v3M1 4.500L5 1l3.500 3.500L5 8z" /><path d="M12.500 4L8 9.500l1.500 1.500 4-5" /><path d="M7.500 9.500l2 1.500q-1.500 3-5 2 2-1 3-3.500z" fill={B} stroke={B} /></Svg>} />
      <Sep />
      <Item text="新建批注" k="M" icon={<Svg w={14} h={14}><path d="M6.500 2.500h7v7.500H7l-3 3v-3H1.500V7" /><path d="M3.500 0v6M.5 3h6" stroke="#4cc27a" strokeWidth="1.200" /></Svg>} />
    </div>
  );
}

export default function App() {
  return (
    <div className="relative flex h-screen flex-col overflow-hidden bg-[#323130] font-['Open_Sans','Noto_Sans_CJK_SC',sans-serif]">
      <TabBar />
      <Ribbon />
      <QuickBar />
      <div className="flex min-h-0 flex-1 bg-[#262626]">
        <aside className="flex w-[135px] shrink-0 items-start gap-3 pl-2 pt-3.5">
          <span className="w-[5px] text-[11px] leading-3 text-[#f3f2f1]">1</span>
          <button aria-label="幻灯片 1" className="h-[55px] w-[94px] border-[3px] border-[#e08677]">
            <span className="flex h-full items-start justify-center border border-[#8a8886] bg-white pt-[11px]">
              <span className="mr-px h-[19px] w-[19px] bg-[#ed7d31]" />
            </span>
          </button>
        </aside>
        <Stage />
        <DesignPane />
      </div>
      <StatusBar />
      <ContextMenu />
      <MiniToolbar />
      <svg width="150" height="118" viewBox="0 0 150 118" fill="none" className="pointer-events-none absolute left-[526px] top-[82px]" aria-hidden="true">
        <ellipse cx="75" cy="59" rx="73.500" ry="57.500" stroke="#d8232a" strokeWidth="1.600" />
      </svg>
    </div>
  );
}
